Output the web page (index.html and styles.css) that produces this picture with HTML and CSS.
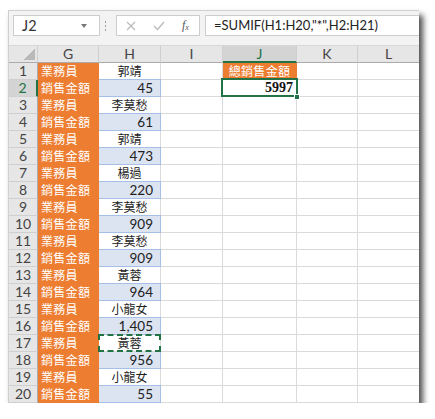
FILE: index.html
```html
<!DOCTYPE html>
<html>
<head>
<meta charset="utf-8">
<link rel="stylesheet" href="styles.css">
</head>
<body>
<div class="page">
<div class="win">
  <div class="bar">
    <div class="namebox"><span class="nb-text">J2</span><span class="nb-arrow"></span></div>
    <div class="dots"><i></i><i></i><i></i></div>
    <div class="fxbox">
      <svg class="ic-x" width="10" height="10" viewBox="0 0 10 10"><path d="M1 1L9 9M9 1L1 9" stroke="#b9b9b9" stroke-width="1.2" fill="none"/></svg>
      <svg class="ic-ok" width="12" height="10" viewBox="0 0 12 10"><path d="M1 5L4.5 8.5L11 1" stroke="#b9b9b9" stroke-width="1.3" fill="none"/></svg>
      <span class="ic-fx">f<sub>x</sub></span>
    </div>
    <div class="formula">=SUMIF(H1:H20,"*",H2:H21)</div>
  </div>
  <div class="sheet">
    <div class="hd corner"></div><div class="hd">G</div><div class="hd">H</div><div class="hd">I</div><div class="hd hsel">J</div><div class="hd">K</div><div class="hd">L</div>

    <div class="rh">1</div><div class="c og">業務員</div><div class="c nm">郭靖</div><div class="c"></div><div class="c og ctr">總銷售金額</div><div class="c"></div><div class="c"></div>
    <div class="rh rsel">2</div><div class="c og">銷售金額</div><div class="c bl">45</div><div class="c"></div><div class="c sel">5997<span class="handle"></span></div><div class="c"></div><div class="c"></div>
    <div class="rh">3</div><div class="c og">業務員</div><div class="c nm">李莫愁</div><div class="c"></div><div class="c"></div><div class="c"></div><div class="c"></div>
    <div class="rh">4</div><div class="c og">銷售金額</div><div class="c bl">61</div><div class="c"></div><div class="c"></div><div class="c"></div><div class="c"></div>
    <div class="rh">5</div><div class="c og">業務員</div><div class="c nm">郭靖</div><div class="c"></div><div class="c"></div><div class="c"></div><div class="c"></div>
    <div class="rh">6</div><div class="c og">銷售金額</div><div class="c bl">473</div><div class="c"></div><div class="c"></div><div class="c"></div><div class="c"></div>
    <div class="rh">7</div><div class="c og">業務員</div><div class="c nm">楊過</div><div class="c"></div><div class="c"></div><div class="c"></div><div class="c"></div>
    <div class="rh">8</div><div class="c og">銷售金額</div><div class="c bl">220</div><div class="c"></div><div class="c"></div><div class="c"></div><div class="c"></div>
    <div class="rh">9</div><div class="c og">業務員</div><div class="c nm">李莫愁</div><div class="c"></div><div class="c"></div><div class="c"></div><div class="c"></div>
    <div class="rh">10</div><div class="c og">銷售金額</div><div class="c bl">909</div><div class="c"></div><div class="c"></div><div class="c"></div><div class="c"></div>
    <div class="rh">11</div><div class="c og">業務員</div><div class="c nm">李莫愁</div><div class="c"></div><div class="c"></div><div class="c"></div><div class="c"></div>
    <div class="rh">12</div><div class="c og">銷售金額</div><div class="c bl">909</div><div class="c"></div><div class="c"></div><div class="c"></div><div class="c"></div>
    <div class="rh">13</div><div class="c og">業務員</div><div class="c nm">黃蓉</div><div class="c"></div><div class="c"></div><div class="c"></div><div class="c"></div>
    <div class="rh">14</div><div class="c og">銷售金額</div><div class="c bl">964</div><div class="c"></div><div class="c"></div><div class="c"></div><div class="c"></div>
    <div class="rh">15</div><div class="c og">業務員</div><div class="c nm">小龍女</div><div class="c"></div><div class="c"></div><div class="c"></div><div class="c"></div>
    <div class="rh">16</div><div class="c og">銷售金額</div><div class="c bl">1,405</div><div class="c"></div><div class="c"></div><div class="c"></div><div class="c"></div>
    <div class="rh">17</div><div class="c og">業務員</div><div class="c nm copy">黃蓉</div><div class="c"></div><div class="c"></div><div class="c"></div><div class="c"></div>
    <div class="rh">18</div><div class="c og">銷售金額</div><div class="c bl">956</div><div class="c"></div><div class="c"></div><div class="c"></div><div class="c"></div>
    <div class="rh">19</div><div class="c og">業務員</div><div class="c nm">小龍女</div><div class="c"></div><div class="c"></div><div class="c"></div><div class="c"></div>
    <div class="rh">20</div><div class="c og">銷售金額</div><div class="c bl">55</div><div class="c"></div><div class="c"></div><div class="c"></div><div class="c"></div>
  </div>
</div>
</div>
</body>
</html>
```
FILE: styles.css
```css
* { box-sizing: border-box; }
html, body { margin: 0; padding: 0; background: #ffffff; }
.page { padding: 10px 0 0 8px; }
.win {
  width: 411px;
  height: 393px;
  background: #ffffff;
  border-left: 1px solid #d0d0d0;
  border-top: 1px solid #d0d0d0;
  box-shadow: 4px 5px 6px rgba(0,0,0,0.7);
  overflow: hidden;
  font-family: Lato, "Liberation Sans", sans-serif;
  color: #222;
}
.bar {
  height: 34px;
  background: #f3f3f3;
  display: flex;
  align-items: flex-start;
  padding: 4px 0 0 4px;
}
.namebox {
  width: 87px;
  height: 21px;
  background: #fff;
  border: 1px solid #cdcdcd;
  display: flex;
  align-items: center;
  justify-content: space-between;
  padding: 0 12px 0 8px;
  font-size: 14.5px;
  color: #333;
}
.nb-arrow {
  width: 0; height: 0;
  border-left: 3.5px solid transparent;
  border-right: 3.5px solid transparent;
  border-top: 4px solid #777;
}
.dots {
  width: 10px;
  height: 21px;
  margin-right: 6px;
  display: flex;
  flex-direction: column;
  align-items: center;
  justify-content: center;
  gap: 2px;
}
.dots i { width: 1px; height: 2px; background: #a0a0a0; display: block; }
.fxbox {
  width: 84px;
  height: 21px;
  background: #fff;
  border: 1px solid #cdcdcd;
  display: flex;
  align-items: center;
  padding: 0 0 0 9px;
}
.ic-x { margin-right: 17px; }
.ic-ok { margin-right: 17px; }
.ic-fx {
  font-family: "Liberation Serif", serif;
  font-style: italic;
  font-size: 12px;
  color: #555;
}
.ic-fx sub { font-size: 8px; vertical-align: -1px; }
.formula {
  flex: 1;
  margin-left: 5px;
  height: 21px;
  background: #fff;
  border: 1px solid #cdcdcd;
  border-right: none;
  padding-left: 8px;
  font-size: 13px;
  line-height: 19px;
  color: #222;
  white-space: nowrap;
}
.sheet {
  display: grid;
  grid-template-columns: 29px 61px 62px 62px 74px 61px 62px;
  grid-auto-rows: 17px;
  border-top: 1px solid #d8d8d8;
}
.hd {
  background: #e6e6e6;
  border-right: 1px solid #cfcfcf;
  border-bottom: 1px solid #ababab;
  text-align: center;
  font-size: 14px;
  line-height: 16px;
  color: #444;
}
.hd.corner {
  background: #e6e6e6 linear-gradient(to bottom right, transparent 50%, #b9b9b9 50%) no-repeat right 2px bottom 2px / 11px 11px;
}
.hd.hsel {
  background: #d4d4d4;
  border-bottom: 2px solid #217346;
  color: #217346;
}
.rh {
  background: #e6e6e6;
  border-right: 1px solid #ababab;
  border-bottom: 1px solid #cfcfcf;
  text-align: center;
  font-size: 14px;
  line-height: 16px;
  color: #444;
}
.rh.rsel {
  background: #d4d4d4;
  border-right: 2px solid #217346;
  color: #217346;
}
.c {
  border-right: 1px solid #dadada;
  border-bottom: 1px solid #dadada;
  font-size: 13px;
  line-height: 16px;
  white-space: nowrap;
  overflow: visible;
}
.og {
  background: #ed7d31;
  border-color: #ed7d31;
  color: #fff;
  font-family: "Noto Sans CJK TC", sans-serif;
  font-size: 12px;
  padding-left: 3px;
  letter-spacing: 0.3px;
}
.og.ctr { text-align: center; padding-left: 0; }
.nm {
  text-align: center;
  font-family: "Noto Sans CJK TC", sans-serif;
  font-size: 12px;
  color: #222;
}
.bl {
  background: #dce4f2;
  border-right-color: #a6bfe6;
  border-bottom-color: #a6bfe6;
  box-shadow: 0 -1px 0 #a6bfe6;
  text-align: right;
  padding-right: 7px;
  font-size: 13.5px;
}
.sel {
  position: relative;
  text-align: right;
  padding-right: 3px;
  font-family: "Liberation Serif", serif;
  font-weight: bold;
  font-size: 14px;
  color: #111;
}
.sel::before {
  content: "";
  position: absolute;
  left: -2px; top: -2px; right: -2px; bottom: -1px;
  border: 2px solid #217346;
}
.handle {
  position: absolute;
  right: -4px;
  bottom: -4px;
  width: 6px;
  height: 6px;
  background: #217346;
  border: 1px solid #fff;
}
.copy {
  position: relative;
}
.copy::before {
  content: "";
  position: absolute;
  left: -1px; top: -1px; right: -1px; bottom: -1px;
  border: 2px dashed #217346;
}
```
